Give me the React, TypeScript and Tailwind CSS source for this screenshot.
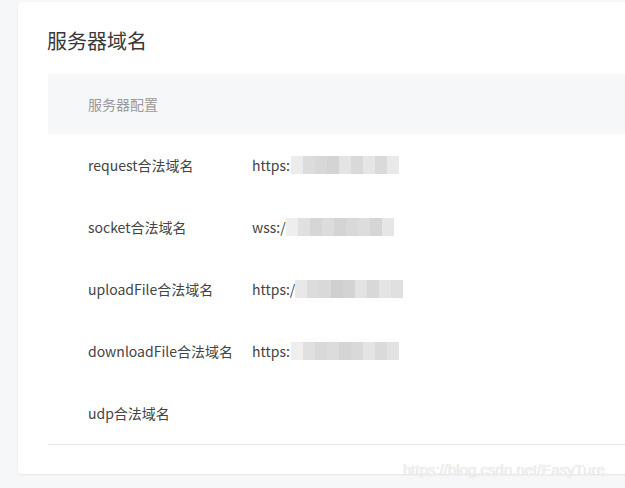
import React from "react";

const font = '"Noto Sans CJK SC", "Noto Sans", sans-serif';

function Mosaic({ cells, offset = 0 }: { cells: string[]; offset?: number }) {
  return (
    <div className="flex h-[18px] blur-[0.6px]" style={{ marginLeft: offset }}>
      {cells.map((c, i) => (
        <div key={i} className="h-full w-[12px]" style={{ backgroundColor: c }} />
      ))}
    </div>
  );
}

const rows: { label: string; prefix?: string; cells?: string[]; offset?: number }[] = [
  { label: "request合法域名", prefix: "https:", cells: ["#ececec", "#dcdcdc", "#d8d8d8", "#d4d4d4", "#e4e4e4", "#d9d9d9", "#e6e6e6", "#dadada", "#e9e9e9"], offset: 1 },
  { label: "socket合法域名", prefix: "wss:/", cells: ["#eeeeee", "#e0e0e0", "#d6d6d6", "#dcdcdc", "#d4d4d4", "#d9d9d9", "#dddddd", "#d6d6d6", "#e6e6e6"], offset: 0 },
  { label: "uploadFile合法域名", prefix: "https:/", cells: ["#e8e8e8", "#dcdcdc", "#d9d9d9", "#cfcfcf", "#d3d3d3", "#e3e3e3", "#d8d8d8", "#e4e4e4", "#e0e0e0"], offset: 0 },
  { label: "downloadFile合法域名", prefix: "https:", cells: ["#eeeeee", "#e0e0e0", "#d8d8d8", "#dcdcdc", "#d4d4d4", "#d9d9d9", "#e4e4e4", "#dadada", "#e2e2e2"], offset: 1 },
  { label: "udp合法域名" },
];

export default function App() {
  return (
    <div
      className="relative w-[625px] h-[488px] overflow-hidden bg-[#f6f7f9] pt-[2px] pl-[18px]"
      style={{ fontFamily: font }}
    >
      <div className="w-[640px] h-[472px] bg-white rounded-[4px] shadow-[0_1px_2px_rgba(0,0,0,0.08)] pl-[30px] pt-[25px]">
        <div className="text-[20px] leading-[28px] text-[#383838] -ml-[1px]">服务器域名</div>
        <div className="mt-[19px]">
          <div className="h-[60px] bg-[#f6f7f9] flex items-center pl-[40px] text-[14px] text-[#9a9a9a]">
            服务器配置
          </div>
          {rows.map((r) => (
            <div key={r.label} className="h-[62px] flex items-center pl-[40px] text-[14px] text-[#444444]">
              <div className="w-[164px] shrink-0">{r.label}</div>
              {r.prefix && (
                <div className="flex items-center">
                  <span>{r.prefix}</span>
                  {r.cells && <Mosaic cells={r.cells} offset={r.offset} />}
                </div>
              )}
            </div>
          ))}
          <div className="h-px bg-[#e7e7eb]" />
        </div>
      </div>
      <div
        className="absolute left-[403px] top-[460px] text-[15px] leading-[20px] text-[#f3f3f3]"
        style={{ fontFamily: '"Liberation Sans", Arial, sans-serif', textShadow: "0 0 1px #c8c8c8" }}
      >
        https://blog.csdn.net/EasyTure
      </div>
    </div>
  );
}
